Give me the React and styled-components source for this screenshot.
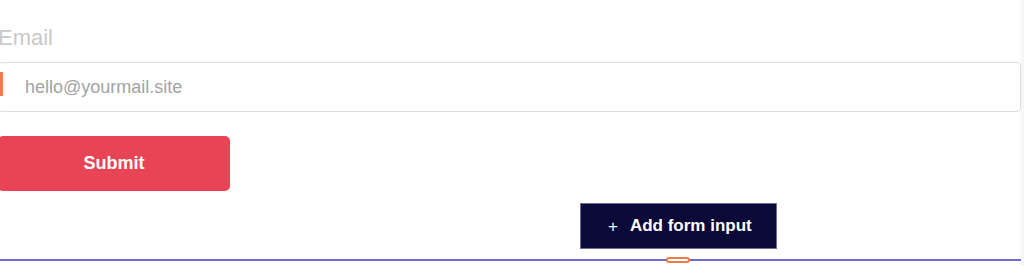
import React from 'react'
import styled, { createGlobalStyle } from 'styled-components'

const GlobalStyle = createGlobalStyle`
  *, *::before, *::after {
    box-sizing: border-box;
  }
  html, body {
    margin: 0;
    padding: 0;
    background: #fff;
    font-family: "Liberation Sans", Arial, sans-serif;
  }
`;

const Page = styled.div`
  display: flex;
  width: 1024px;
  height: 266px;
  overflow: hidden;
  background: #fff;
`;

const Canvas = styled.div`
  flex: 1;
  display: flex;
  flex-direction: column;
  position: relative;
`;

const Gutter = styled.div`
  width: 3px;
  background: #f6f6f6;
`;

const Form = styled.form`
  display: flex;
  flex-direction: column;
  margin-left: -2px;
  padding-top: 24px;
`;

const Label = styled.label`
  font-size: 22px;
  line-height: 28px;
  color: #c9c9c9;
  margin-bottom: 10px;
`;

const Field = styled.div`
  position: relative;
  display: flex;
  align-items: center;
  height: 50px;
  border: 1px solid #dcdcdc;
  border-radius: 4px;
  margin-bottom: 24px;
`;

const Caret = styled.span`
  position: absolute;
  left: 1px;
  top: 9px;
  width: 3px;
  height: 24px;
  background: #f07a45;
`;

const Input = styled.input`
  flex: 1;
  border: none;
  outline: none;
  background: transparent;
  padding: 0 0 0 26px;
  font-family: inherit;
  font-size: 18px;
  color: #333;
  &::placeholder {
    color: #a3a3a3;
  }
`;

const Submit = styled.button`
  width: 232px;
  height: 55px;
  border: none;
  border-radius: 5px;
  background: #e94455;
  color: #fff;
  font-family: inherit;
  font-size: 18px;
  font-weight: 700;
`;

const Toolbar = styled.div`
  display: flex;
  margin-top: 12px;
  padding-left: 580px;
`;

const AddButton = styled.button`
  display: flex;
  align-items: center;
  gap: 12px;
  height: 46px;
  padding: 0 24px 0 27px;
  border: 1px solid #6e6e9c;
  background: #0b0937;
  color: #fff;
  font-family: inherit;
  font-size: 17px;
  font-weight: 700;
`;

const Plus = styled.span`
  font-size: 17px;
  font-weight: 400;
  line-height: 1;
`;

const Divider = styled.div`
  position: relative;
  margin-top: 10px;
  height: 2px;
  background: #6f6cd0;
`;

const Handle = styled.span`
  position: absolute;
  left: 666px;
  top: -2px;
  width: 24px;
  height: 6px;
  border: 2px solid #f07a45;
  border-radius: 4px;
  background: #fff;
`;

export default function App() {
  return (
    <>
      <GlobalStyle />
      <Page>
        <Canvas>
          <Form onSubmit={e => e.preventDefault()}>
            <Label>Email</Label>
            <Field>
              <Caret />
              <Input placeholder="hello@yourmail.site" />
            </Field>
            <Submit>Submit</Submit>
          </Form>
          <Toolbar>
            <AddButton type="button">
              <Plus>+</Plus>
              Add form input
            </AddButton>
          </Toolbar>
          <Divider>
            <Handle />
          </Divider>
        </Canvas>
        <Gutter />
      </Page>
    </>
  )
}
